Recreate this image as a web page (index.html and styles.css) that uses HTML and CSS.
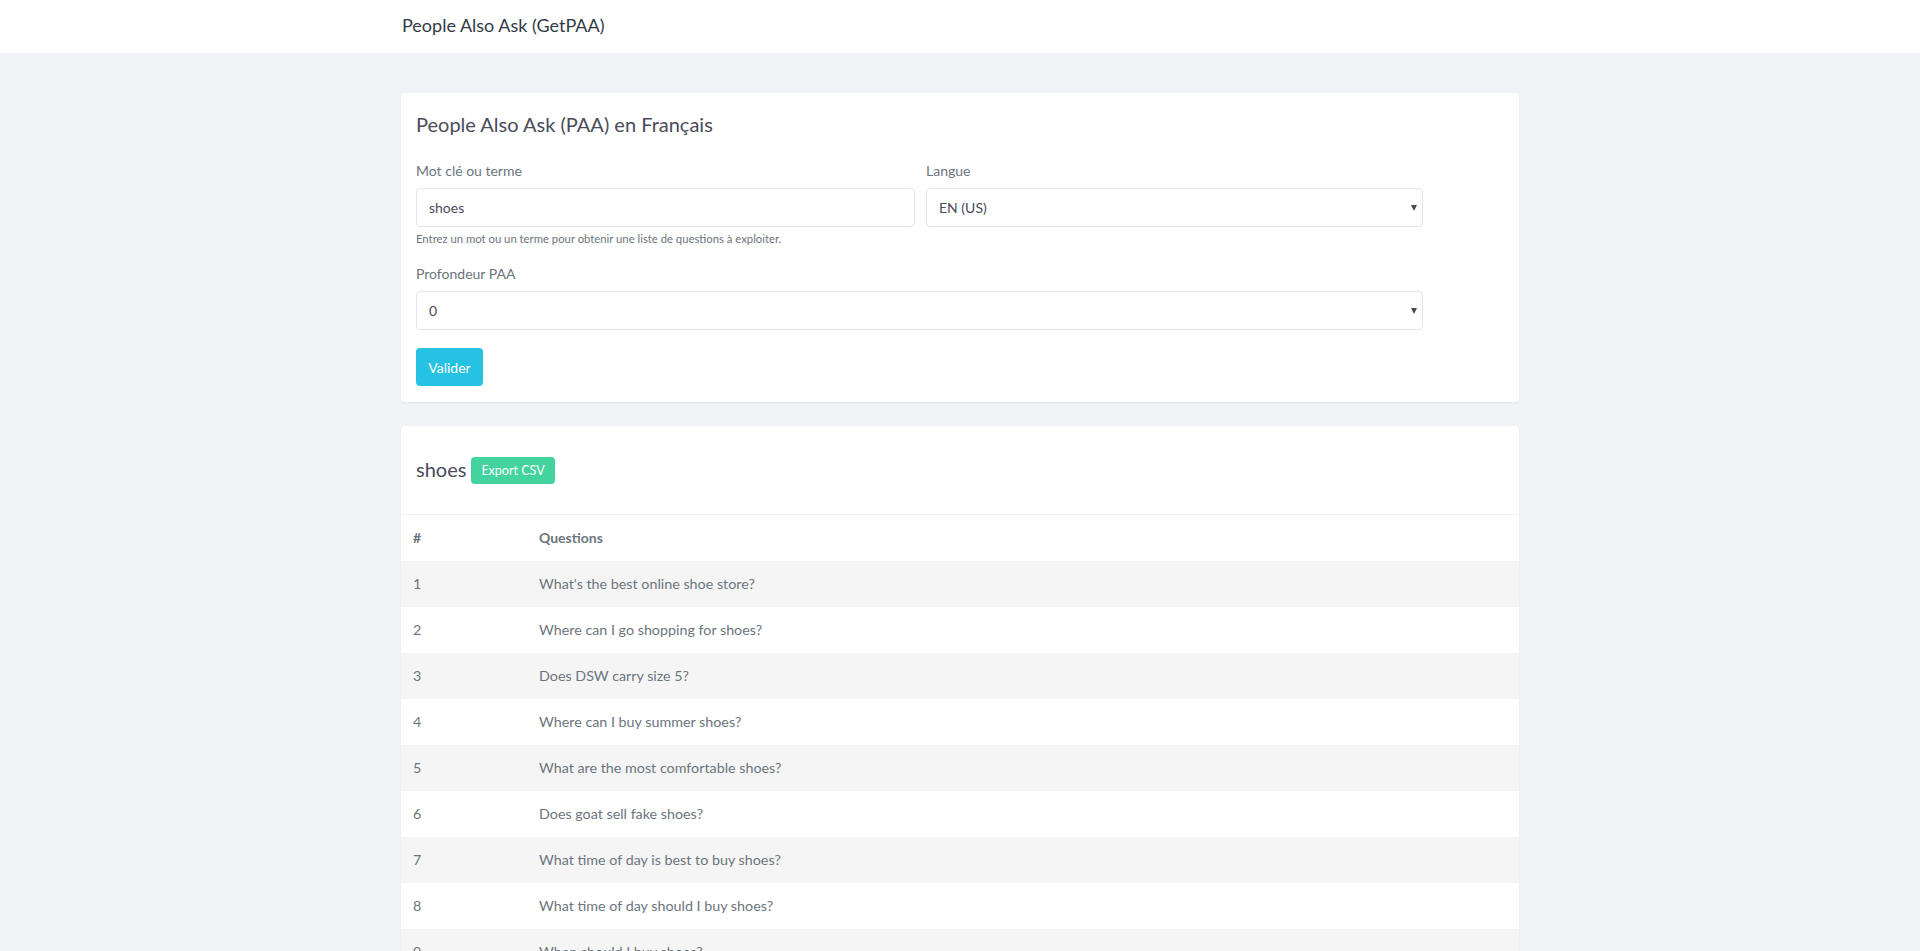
FILE: index.html
```html
<!DOCTYPE html>
<html lang="fr">
<head>
<meta charset="utf-8">
<title>People Also Ask (GetPAA)</title>
<link rel="stylesheet" href="styles.css">
</head>
<body>
<header class="navbar">
  <div class="container">
    <span class="brand">People Also Ask (GetPAA)</span>
  </div>
</header>
<main class="container page">
  <section class="card form-card">
    <h4 class="card-title">People Also Ask (PAA) en Français</h4>
    <form class="paa-form">
      <div class="form-row">
        <div class="field">
          <label class="label" for="kw">Mot clé ou terme</label>
          <input class="control" id="kw" type="text" value="shoes">
          <small class="help">Entrez un mot ou un terme pour obtenir une liste de questions à exploiter.</small>
        </div>
        <div class="field">
          <label class="label" for="lang">Langue</label>
          <div class="select-wrap">
            <select class="control" id="lang"><option>EN (US)</option></select>
          </div>
        </div>
      </div>
      <div class="field depth">
        <label class="label" for="depth">Profondeur PAA</label>
        <div class="select-wrap">
          <select class="control" id="depth"><option>0</option></select>
        </div>
      </div>
      <button class="btn btn-info" type="button">Valider</button>
    </form>
  </section>

  <section class="card results-card">
    <div class="results-head">
      <h4 class="results-title">shoes</h4>
      <button class="btn btn-success btn-sm" type="button">Export CSV</button>
    </div>
    <table class="table">
      <thead>
        <tr><th class="col-num">#</th><th>Questions</th></tr>
      </thead>
      <tbody>
        <tr><td class="col-num">1</td><td>What's the best online shoe store?</td></tr>
        <tr><td class="col-num">2</td><td>Where can I go shopping for shoes?</td></tr>
        <tr><td class="col-num">3</td><td>Does DSW carry size 5?</td></tr>
        <tr><td class="col-num">4</td><td>Where can I buy summer shoes?</td></tr>
        <tr><td class="col-num">5</td><td>What are the most comfortable shoes?</td></tr>
        <tr><td class="col-num">6</td><td>Does goat sell fake shoes?</td></tr>
        <tr><td class="col-num">7</td><td>What time of day is best to buy shoes?</td></tr>
        <tr><td class="col-num">8</td><td>What time of day should I buy shoes?</td></tr>
        <tr><td class="col-num">9</td><td>When should I buy shoes?</td></tr>
      </tbody>
    </table>
  </section>
</main>
</body>
</html>
```

FILE: styles.css
```css
* { box-sizing: border-box; }

html, body {
  margin: 0;
  padding: 0;
}

body {
  background: #f2f3f7;
  font-family: "Lato", "Noto Sans", "Liberation Sans", sans-serif;
  font-size: 14px;
  line-height: 1.5;
  color: #6c757d;
}

.container {
  width: 1118px;
  margin: 0 auto;
}

.navbar {
  background: #ffffff;
  height: 53px;
  display: flex;
  align-items: center;
}

.brand {
  display: block;
  padding-left: 1px;
  font-size: 18px;
  color: #323a46;
  line-height: 22px;
  padding-bottom: 3px;
}

.page {
  padding-top: 40px;
  padding-bottom: 40px;
}

.card {
  background: #ffffff;
  border-radius: 4px;
  box-shadow: 0 1px 2px rgba(60, 70, 90, 0.08);
  margin-bottom: 24px;
}

.form-card {
  padding: 19px 15px 16px;
}

.card-title {
  margin: 0 0 24px;
  font-size: 20px;
  line-height: 24px;
  font-weight: 400;
  color: #4b4b5a;
}

.paa-form {
  width: 1007px;
}

.form-row {
  display: grid;
  grid-template-columns: 499px 497px;
  column-gap: 11px;
}

.field {
  display: flex;
  flex-direction: column;
}

.label {
  font-size: 14px;
  line-height: 21px;
  margin-bottom: 7px;
  color: #6c757d;
}

.control {
  width: 100%;
  height: 39px;
  padding: 0 12px;
  border: 1px solid #e2e6ef;
  border-radius: 4px;
  background: #ffffff;
  font-family: inherit;
  font-size: 14px;
  color: #4b4b5a;
  outline: none;
  -webkit-appearance: none;
  appearance: none;
}

.select-wrap {
  position: relative;
}

.select-wrap::after {
  content: "";
  position: absolute;
  right: 6px;
  top: 17px;
  border-left: 3.5px solid transparent;
  border-right: 3.5px solid transparent;
  border-top: 6px solid #4a4a55;
  pointer-events: none;
}

.help {
  display: block;
  margin-top: 4px;
  font-size: 11.3px;
  line-height: 16px;
  color: #6c757d;
}

.depth {
  margin-top: 16px;
}

.btn {
  border: none;
  font-family: inherit;
  color: #ffffff;
  border-radius: 4px;
  cursor: pointer;
}

.btn-info {
  margin-top: 18px;
  background: #25c2e3;
  width: 67px;
  height: 38px;
  font-size: 14px;
  padding: 0;
}

.btn-success {
  background: #43d39e;
}

.btn-sm {
  height: 27px;
  padding: 0 10px;
  font-size: 12.5px;
  line-height: 27px;
}

.results-head {
  height: 88px;
  padding: 0 15px;
  display: flex;
  align-items: center;
  gap: 5px;
}

.results-title {
  margin: 0;
  font-size: 20px;
  font-weight: 400;
  line-height: 28px;
  color: #4b4b5a;
  padding-bottom: 2px;
}

.table {
  width: 100%;
  border-collapse: collapse;
}

.table th,
.table td {
  text-align: left;
  padding: 12px 12px;
  line-height: 21px;
  font-size: 14px;
  border-top: 1px solid #eef0f4;
}

.table th {
  font-weight: 700;
  color: #6c757d;
}

.table td {
  font-size: 14.3px;
  color: #6c757d;
}

.table .col-num {
  width: 126px;
}

.table tbody tr:nth-child(odd) {
  background: #f5f5f6;
}

.table tbody td {
  border-top: 1px solid transparent;
}
```
